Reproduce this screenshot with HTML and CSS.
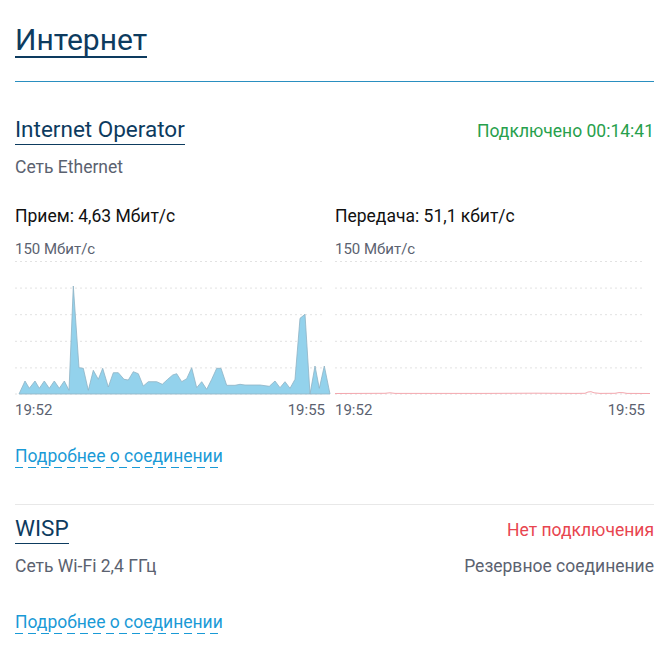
FILE: index.html
```html
<!DOCTYPE html>
<html lang="ru">
<head>
    <meta charset="UTF-8">
    <title>Интернет</title>
    <link rel="stylesheet" href="styles.css">
</head>
<body>
    <div class="page">
        <!-- Page header -->
        <div class="page-head">
            <h1 class="page-title">Интернет</h1>
        </div>

        <!-- Main connection -->
        <div class="conn">
            <div class="conn-head">
                <h2 class="conn-title">Internet Operator</h2>
                <span class="status status-ok">Подключено 00:14:41</span>
            </div>
            <div class="conn-sub">
                <span>Сеть Ethernet</span>
            </div>

            <div class="charts">
                <div class="chart">
                    <div class="rate">Прием: 4,63 Мбит/с</div>
                    <div class="scale">150 Мбит/с</div>
                    <svg class="plot" width="320" height="140" viewBox="0 256 320 140">
                        <g class="grid">
                            <line x1="0" y1="260.5" x2="310" y2="260.5"/>
                            <line x1="0" y1="287.1" x2="310" y2="287.1"/>
                            <line x1="0" y1="313.7" x2="310" y2="313.7"/>
                            <line x1="0" y1="340.3" x2="310" y2="340.3"/>
                            <line x1="0" y1="366.9" x2="310" y2="366.9"/>
                            <line x1="0" y1="393" x2="310" y2="393"/>
                        </g>
                        <polygon class="area-rx" points="4,393 10,380 14.3,387.3 20,380 24.3,387.3 29.3,380 34.3,387.3 39.3,380 44.3,387.3 49.3,380 54,389.3 58.3,285 64,366.7 68.3,367.3 73.3,389.3 78.3,369.3 83.3,378.3 87.7,367.3 93.3,386 98.3,371.7 103.3,371.7 109,378.3 113.3,379 118.3,370.7 123.3,372.7 128.3,385 133.3,380.7 141.7,380.7 147.3,383.3 152.7,378.3 157.7,374 161.7,372.7 166.7,380.7 171.7,377.7 176.7,366.7 181.7,386.7 186.7,380.7 191.7,388.3 196.7,378.3 201.7,367.3 206,367.3 211.7,384.3 220,384.3 225,383.3 230,384 245,384 254.3,385.3 260,380 265,386.7 270,380.7 275,387.3 280,378.3 285,317.3 290,313.3 295,393 300,365 304.3,387.3 309.3,365 315,393"/>
                    </svg>
                    <div class="times">
                        <span>19:52</span>
                        <span>19:55</span>
                    </div>
                </div>
                <div class="chart">
                    <div class="rate">Передача: 51,1 кбит/с</div>
                    <div class="scale">150 Мбит/с</div>
                    <svg class="plot" width="320" height="140" viewBox="0 256 320 140">
                        <g class="grid">
                            <line x1="0" y1="260.5" x2="310" y2="260.5"/>
                            <line x1="0" y1="287.1" x2="310" y2="287.1"/>
                            <line x1="0" y1="313.7" x2="310" y2="313.7"/>
                            <line x1="0" y1="340.3" x2="310" y2="340.3"/>
                            <line x1="0" y1="366.9" x2="310" y2="366.9"/>
                            <line x1="0" y1="393" x2="310" y2="393"/>
                        </g>
                        <polyline class="line-tx" points="0,392.5 50,392.3 55,391.8 60,392.4 150,392.4 200,392.2 240,392.4 250,392.3 253,391 256,390.7 259,391.8 265,392.4 280,392.3 284,391.6 288,391.7 292,392.4 315,392.5"/>
                    </svg>
                    <div class="times">
                        <span>19:52</span>
                        <span>19:55</span>
                    </div>
                </div>
            </div>

            <a class="more" href="#">Подробнее о соединении</a>
        </div>

        <!-- Backup connection -->
        <div class="conn conn-backup">
            <div class="conn-head">
                <h2 class="conn-title">WISP</h2>
                <span class="status status-off">Нет подключения</span>
            </div>
            <div class="conn-sub">
                <span>Сеть Wi-Fi 2,4 ГГц</span>
                <span>Резервное соединение</span>
            </div>
            <a class="more more-last" href="#">Подробнее о соединении</a>
        </div>
    </div>
</body>
</html>
```

FILE: styles.css
```css
/* General */
body {
    margin: 0;
    background: #fff;
    font-family: Roboto, "Noto Sans", sans-serif;
    color: #1c1c1c;
}

.page {
    padding: 0 13px 0 15px;
}

/* Page header */
.page-head {
    padding-top: 24px;
    padding-bottom: 23px;
    border-bottom: 1px solid #2a8fc0;
}

.page-title {
    width: fit-content;
    margin: 0;
    font-size: 30px;
    line-height: 32px;
    font-weight: 400;
    color: #0d3b5f;
    border-bottom: 2px solid #0d3b5f;
}

/* Connection block */
.conn {
    padding-top: 34px;
}

.conn-backup {
    margin-top: 36px;
    padding-top: 10px;
    border-top: 1px solid #e8e8e8;
}

.conn-head {
    display: flex;
    justify-content: space-between;
    align-items: baseline;
}

.conn-title {
    margin: 0;
    font-size: 22.5px;
    line-height: 26px;
    font-weight: 400;
    color: #0d3b5f;
    padding-bottom: 2px;
    border-bottom: 1px solid #0d3b5f;
}

.status {
    font-size: 17.5px;
}

.status-ok {
    color: #27a04c;
}

.status-off {
    color: #e8454f;
}

.conn-sub {
    display: flex;
    justify-content: space-between;
    margin-top: 12px;
    font-size: 17.5px;
    line-height: 20px;
    color: #5b6270;
}

/* Charts */
.charts {
    display: grid;
    grid-template-columns: 320px 320px;
    margin-top: 29px;
}

.rate {
    font-size: 17.5px;
    line-height: 20px;
    color: #111;
}

.scale {
    margin-top: 15px;
    font-size: 15px;
    line-height: 16px;
    color: #5b6270;
}

.plot {
    display: block;
    overflow: visible;
}

.grid line {
    stroke: #e2e2e2;
    stroke-width: 1;
    stroke-dasharray: 2 3;
}

.area-rx {
    fill: #93d2ec;
    stroke: #8fb3c4;
    stroke-width: 0.8;
}

.line-tx {
    fill: none;
    stroke: #f3a7ae;
    stroke-width: 1;
}

.times {
    display: flex;
    justify-content: space-between;
    width: 310px;
    margin-top: 4px;
    font-size: 15px;
    line-height: 18px;
    color: #5b6270;
}

/* Links */
.more {
    display: block;
    width: fit-content;
    margin-top: 27px;
    font-size: 17.5px;
    line-height: 20px;
    color: #1a9ad6;
    text-decoration: none;
    padding-bottom: 2px;
    background-image: repeating-linear-gradient(to right, #1a9ad6 0 8px, transparent 8px 13px);
    background-size: 100% 1px;
    background-position: left bottom;
    background-repeat: no-repeat;
}

.more-last {
    margin-top: 36px;
}
```
